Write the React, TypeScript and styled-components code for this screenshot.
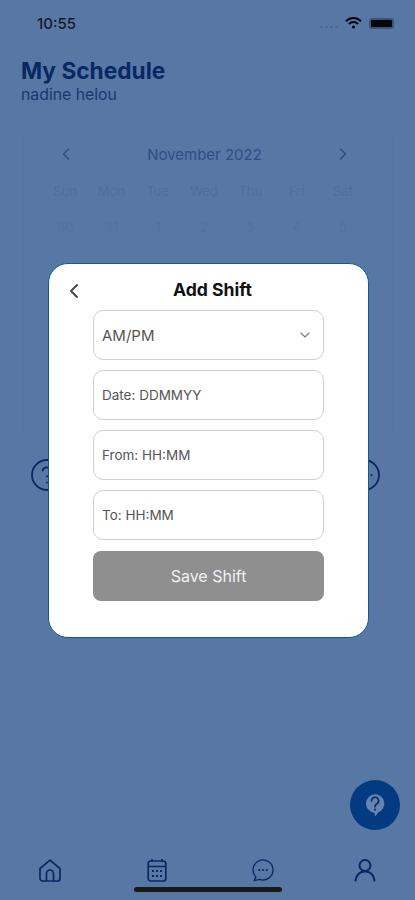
import styled, { createGlobalStyle } from 'styled-components';
import { ChevronDown, ChevronLeft, ChevronRight, CircleEllipsis, CircleHelp } from 'lucide-react';

const colors = {
	backdrop: '#5777a5',
	navy: '#0a2763',
	month: '#2e4f85',
	weekday: '#4e6f9e',
	date: '#5272a1',
	cardLine: '#5575a3',
	fab: '#033a81',
	fieldLine: '#d0d0d0',
	fieldText: '#555',
	saveBg: '#8f8f8f',
	modalLine: '#0f5a8e'
};

const WEEKDAYS = ['Sun', 'Mon', 'Tue', 'Wed', 'Thu', 'Fri', 'Sat'];
const FIRST_WEEK = [30, 31, 1, 2, 3, 4, 5];
const FIELDS = ['Date: DDMMYY', 'From: HH:MM', 'To: HH:MM'];

const GlobalStyle = createGlobalStyle`
	html, body {
		margin: 0;
		padding: 0;
		background: ${colors.backdrop};
	}
	* {
		box-sizing: border-box;
	}
`;

const Screen = styled.div`
	position: relative;
	width: 415px;
	height: 900px;
	overflow: hidden;
	display: flex;
	flex-direction: column;
	background: ${colors.backdrop};
	font-family: Inter, 'Liberation Sans', sans-serif;
`;

const StatusBar = styled.div`
	height: 46px;
	padding: 0 21px 0 37px;
	display: flex;
	align-items: center;
	justify-content: space-between;
`;

const Time = styled.span`
	font-size: 15px;
	font-weight: 500;
	color: #141a28;
`;

const StatusIcons = styled.div`
	display: flex;
	align-items: center;
	gap: 7px;
`;

const Signal = styled.div`
	display: flex;
	gap: 2px;
	margin-top: 8px;
`;

const SignalDot = styled.span`
	width: 3px;
	height: 2px;
	background: #4a6a98;
`;

const Battery = styled.div`
	width: 25px;
	height: 11px;
	padding: 2px;
	border-radius: 3px;
	background: #3d5477;
`;

const BatteryFill = styled.div`
	width: 100%;
	height: 100%;
	border-radius: 1px;
	background: #05070c;
`;

const PageHeader = styled.header`
	padding: 11px 21px 0;
`;

const Title = styled.h1`
	margin: 0;
	font-size: 22.7px;
	line-height: 28px;
	font-weight: 700;
	color: ${colors.navy};
`;

const Subtitle = styled.p`
	margin: 0;
	font-size: 15.8px;
	line-height: 20px;
	color: #1a3871;
`;

const CalendarCard = styled.section`
	margin: 26px 22px 0 23px;
	padding: 10px 26px 0 18px;
	height: 310px;
	border: 1px solid ${colors.cardLine};
	border-radius: 8px;
`;

const MonthRow = styled.div`
	height: 24px;
	padding: 0 13px 0 14px;
	display: flex;
	align-items: center;
	justify-content: space-between;
	color: ${colors.month};
`;

const MonthLabel = styled.span`
	font-size: 15px;
	color: ${colors.month};
`;

const DayGrid = styled.div`
	display: grid;
	grid-template-columns: repeat(7, 1fr);
	margin-top: 13px;
`;

const WeekdayCell = styled.span`
	height: 24px;
	line-height: 24px;
	text-align: center;
	font-size: 13px;
	color: ${colors.weekday};
`;

const DateCell = styled.span`
	height: 46px;
	padding-top: 12px;
	line-height: 24px;
	text-align: center;
	font-size: 13px;
	color: ${colors.date};
`;

const HelpRow = styled.div`
	margin-top: 16px;
	padding: 0 33px 0 29px;
	display: flex;
	justify-content: space-between;
	color: ${colors.navy};
`;

const Spacer = styled.div`
	flex: 1;
`;

const BottomNav = styled.nav`
	padding: 0 0 17px 37px;
	display: grid;
	grid-template-columns: 107px 106px 102px 26px;
	align-items: center;
	color: ${colors.navy};
`;

const HomeBar = styled.div`
	position: absolute;
	left: 134px;
	bottom: 8px;
	width: 148px;
	height: 5px;
	border-radius: 3px;
	background: #1c1a16;
`;

const Fab = styled.button`
	position: absolute;
	right: 15px;
	bottom: 70px;
	width: 50px;
	height: 50px;
	padding: 0;
	border: none;
	border-radius: 50%;
	background: ${colors.fab};
	display: flex;
	align-items: center;
	justify-content: center;
`;

const ModalLayer = styled.div`
	position: absolute;
	inset: 0;
	padding: 1px 0 0 2px;
	display: flex;
	align-items: center;
	justify-content: center;
`;

const Modal = styled.div`
	width: 321px;
	height: 375px;
	padding: 0 44px;
	background: #fff;
	border: 1px solid ${colors.modalLine};
	border-radius: 20px;
	display: flex;
	flex-direction: column;
	gap: 10px;
`;

const ModalHeader = styled.div`
	position: relative;
	height: 36px;
	padding-top: 10px;
	text-align: center;
`;

const BackButton = styled.span`
	position: absolute;
	left: -31px;
	top: 15px;
	display: flex;
	color: #444;
`;

const ModalTitle = styled.h2`
	margin: 0;
	font-size: 17.6px;
	line-height: 32px;
	font-weight: 700;
	color: #111;
	transform: translateX(4px);
`;

const Field = styled.div`
	height: 50px;
	padding: 0 10px 0 8px;
	border: 1px solid ${colors.fieldLine};
	border-radius: 10px;
	display: flex;
	align-items: center;
	justify-content: space-between;
	color: #777;
`;

const FieldLabel = styled.span<{ $large?: boolean }>`
	font-size: ${props => (props.$large ? '15px' : '13.5px')};
	color: ${colors.fieldText};
`;

const SaveButton = styled.button`
	height: 50px;
	margin-top: 1px;
	border: none;
	border-radius: 8px;
	background: ${colors.saveBg};
	color: #f1f1f1;
	font-family: inherit;
	font-size: 16px;
	padding: 0;
`;

const Wifi = () => (
	<svg width='17' height='12' viewBox='0 0 17 12' fill='none' stroke='#05070c' strokeWidth='2'>
		<path d='M1 4.2a10.6 10.6 0 0 1 15 0' />
		<path d='M3.9 7a6.5 6.5 0 0 1 9.2 0' />
		<circle cx='8.5' cy='10' r='1.6' fill='#05070c' stroke='none' />
	</svg>
);

const HomeIcon = () => (
	<svg width='26' height='26' viewBox='0 0 26 26' fill='none' stroke='currentColor' strokeWidth='1.7' strokeLinejoin='round'>
		<path d='M13 3.2 L23 11.5 V21.5 A2.5 2.5 0 0 1 20.5 24 H5.5 A2.5 2.5 0 0 1 3 21.5 V11.5 Z' />
		<path d='M9.5 24 V16.5 A3.5 3.5 0 0 1 16.5 16.5 V24' />
	</svg>
);

const CalendarIcon = () => (
	<svg width='26' height='26' viewBox='0 0 26 26' fill='none' stroke='currentColor' strokeWidth='1.7'>
		<rect x='4.2' y='4' width='17.6' height='20' rx='2.5' />
		<path d='M4.2 9.5 H21.8 M8 2 V5 M18 2 V5' />
		<path d='M8 14 H10 M12 14 H14 M16 14 H18 M8 19 H10 M12 19 H14 M16 19 H18' strokeWidth='1.8' />
	</svg>
);

const ChatIcon = () => (
	<svg width='26' height='26' viewBox='0 0 26 26' fill='none' stroke='currentColor' strokeWidth='1.3'>
		<path d='M5.93 20.07 A10 10 0 1 1 9.58 22.4 L4.2 23.6 Z' strokeLinejoin='round' />
		<circle cx='9.2' cy='13' r='1.1' fill='currentColor' stroke='none' />
		<circle cx='13' cy='13' r='1.1' fill='currentColor' stroke='none' />
		<circle cx='16.8' cy='13' r='1.1' fill='currentColor' stroke='none' />
	</svg>
);

const UserIcon = () => (
	<svg width='26' height='26' viewBox='0 0 26 26' fill='none' stroke='currentColor' strokeWidth='2' strokeLinecap='round'>
		<circle cx='13' cy='8.5' r='5.5' />
		<path d='M3.5 23.5 C4.5 17.5 8 14.5 13 14.5 S21.5 17.5 22.5 23.5' />
	</svg>
);

const HelpBubble = () => (
	<svg width='22' height='25' viewBox='0 0 28 32' fill='none'>
		<path d='M14 1.5 A12 12 0 0 1 18 24.8 L14.5 30 L13 25.4 A12 12 0 0 1 14 1.5 Z' fill='#6585b0' />
		<path d='M9.6 10 A4.5 4.5 0 1 1 16.4 13.8 C14.8 14.9 14 15.7 14 17.6' stroke='#0c2c68' strokeWidth='2.2' strokeLinecap='round' />
		<circle cx='14' cy='21.2' r='1.4' fill='#0c2c68' />
	</svg>
);

const App = () => {
	return (
		<Screen>
			<GlobalStyle />
			<StatusBar>
				<Time>10:55</Time>
				<StatusIcons>
					<Signal>
						<SignalDot />
						<SignalDot />
						<SignalDot />
						<SignalDot />
					</Signal>
					<Wifi />
					<Battery>
						<BatteryFill />
					</Battery>
				</StatusIcons>
			</StatusBar>

			<PageHeader>
				<Title>My Schedule</Title>
				<Subtitle>nadine helou</Subtitle>
			</PageHeader>

			<CalendarCard>
				<MonthRow>
					<ChevronLeft size={20} strokeWidth={1.7} />
					<MonthLabel>November 2022</MonthLabel>
					<ChevronRight size={20} strokeWidth={1.7} />
				</MonthRow>
				<DayGrid>
					{WEEKDAYS.map(d => (
						<WeekdayCell key={d}>{d}</WeekdayCell>
					))}
					{FIRST_WEEK.map((d, i) => (
						<DateCell key={i}>{d}</DateCell>
					))}
				</DayGrid>
			</CalendarCard>

			<HelpRow>
				<CircleHelp size={36} strokeWidth={1.2} />
				<CircleEllipsis size={36} strokeWidth={1.2} />
			</HelpRow>

			<Spacer />

			<BottomNav>
				<HomeIcon />
				<CalendarIcon />
				<ChatIcon />
				<UserIcon />
			</BottomNav>

			<Fab>
				<HelpBubble />
			</Fab>
			<HomeBar />

			<ModalLayer>
				<Modal>
					<ModalHeader>
						<BackButton>
							<ChevronLeft size={24} strokeWidth={1.9} />
						</BackButton>
						<ModalTitle>Add Shift</ModalTitle>
					</ModalHeader>
					<Field>
						<FieldLabel $large>AM/PM</FieldLabel>
						<ChevronDown size={16} strokeWidth={1.6} />
					</Field>
					{FIELDS.map(f => (
						<Field key={f}>
							<FieldLabel>{f}</FieldLabel>
						</Field>
					))}
					<SaveButton>Save Shift</SaveButton>
				</Modal>
			</ModalLayer>
		</Screen>
	);
};

export default App;
